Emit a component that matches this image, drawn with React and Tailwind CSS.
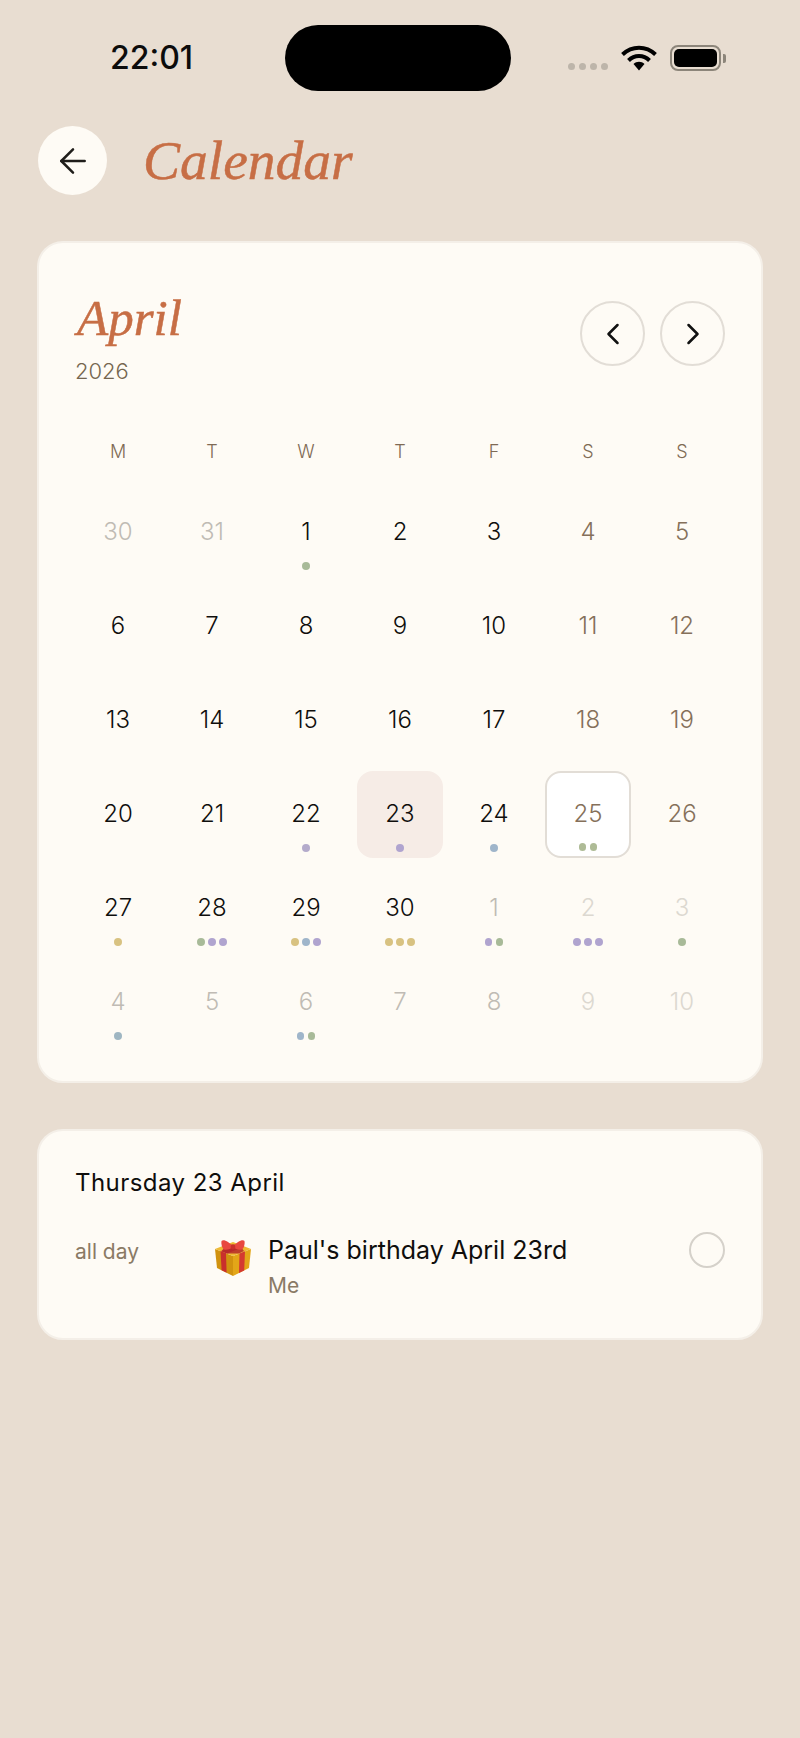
import React from "react";
import { ArrowLeft, ChevronLeft, ChevronRight } from "lucide-react";

const G = "bg-[#a8ba98]", P = "bg-[#b0a4cf]", B = "bg-[#9fb5ca]", Y = "bg-[#d8c281]", O = "bg-[#aebb96]", T = "bg-[#9fb6c2]", L = "bg-[#b4abcb]";

// tone: n normal, w weekend, m muted, f faint
const days = [
  ["30", "m"], ["31", "m"], ["1", "n", [G]], ["2", "n"], ["3", "n"], ["4", "w"], ["5", "w"],
  ["6", "n"], ["7", "n"], ["8", "n"], ["9", "n"], ["10", "n"], ["11", "w"], ["12", "w"],
  ["13", "n"], ["14", "n"], ["15", "n"], ["16", "n"], ["17", "n"], ["18", "w"], ["19", "w"],
  ["20", "n"], ["21", "n"], ["22", "n", [L]], ["23", "n", [P], "today"], ["24", "n", [B]], ["25", "w", [O, O], "sel"], ["26", "w"],
  ["27", "n", [Y]], ["28", "n", [G, P, P]], ["29", "n", [Y, B, P]], ["30", "n", [Y, Y, Y]], ["1", "m", [P, G]], ["2", "f", [P, P, P]], ["3", "f", [G]],
  ["4", "m", [T]], ["5", "m"], ["6", "m", [B, G]], ["7", "m"], ["8", "m"], ["9", "f"], ["10", "f"],
];

const tones = {
  n: "text-[#0f0e0c]",
  w: "text-[#85705a]",
  m: "text-[#c0bbb4]",
  f: "text-[#dcd8d0]",
};

function Cell({ label, tone, dots = [], state }) {
  const box =
    state === "today"
      ? "bg-[#f6ece6] border-[#f6ece6]"
      : state === "sel"
      ? "bg-white border-[#e2ddd6]"
      : "border-transparent";
  return (
    <div className={`h-[87px] rounded-[16px] border-2 flex flex-col items-center pt-[26px] ${box}`}>
      <span className={`text-[24px] leading-[30px] font-light ${tones[tone]}`}>{label}</span>
      <div className={`flex gap-[3.5px] ${state === "sel" ? "mt-[14px]" : "mt-[15px]"}`}>
        {dots.map((c, i) => (
          <span key={i} className={`w-[7.5px] h-[7.5px] rounded-full ${c}`} />
        ))}
      </div>
    </div>
  );
}

function Gift() {
  return (
    <svg width="40" height="40" viewBox="0 0 40 40" className="shrink-0 mt-[4px]">
      <path d="M2 11 L20 18 L20 38 L4 30 Z" fill="#d1920f" />
      <path d="M20 18 L38 11 L36 30 L20 38 Z" fill="#e3a618" />
      <path d="M2 11 L20 4 L38 11 L20 18 Z" fill="#eeba34" />
      <path d="M7.5 13 L13 15.2 L13.6 34.8 L8.6 32.2 Z" fill="#c9302c" />
      <path d="M26.5 15.5 L32 13.3 L31.2 32.6 L26 35 Z" fill="#d43a30" />
      <path d="M8 13.2 L25 6.5 L31 8.8 L14 15.6 Z" fill="#c9302c" />
      <path d="M14 6.5 L26 6.5 L31 13 L26 15.5 L14 15.5 L8.5 13 Z" fill="#b5292a" opacity="0.85" />
      <path d="M20 9 C16 3 10 1 8.5 3 C8 6 9 10 11 11.5 C14 12 18 11 20 9 Z" fill="#e8483f" />
      <path d="M20 9 C24 3 30 1 31.5 3 C32 6 31 10 29 11.5 C26 12 22 11 20 9 Z" fill="#e8483f" />
      <circle cx="20" cy="9" r="2.4" fill="#c9302c" />
    </svg>
  );
}

export default function App() {
  return (
    <div className="w-[800px] h-[1738px] bg-[#e8ddd1] font-['Inter',sans-serif] text-[#0f0e0c]">
      <div className="pt-[25px] pl-[110px] pr-[74px] flex items-start">
        <div className="w-[176px] h-[66px] flex items-center text-[32px] leading-[40px] font-medium text-[#0c0c0c]">
          22:01
        </div>
        <div className="w-[228px] h-[66px] rounded-full bg-black" />
        <div className="ml-[57px] h-[66px] flex items-start pt-[20px]">
          <div className="flex gap-[4px] mt-[18px]">
            <span className="w-[7px] h-[7px] rounded-full bg-[#bdb5aa]" />
            <span className="w-[7px] h-[7px] rounded-full bg-[#bdb5aa]" />
            <span className="w-[7px] h-[7px] rounded-full bg-[#bdb5aa]" />
            <span className="w-[7px] h-[7px] rounded-full bg-[#bdb5aa]" />
          </div>
          <svg width="36" height="26" viewBox="0 0 36 26" className="ml-[13px]">
            <path d="M1.5 9.5 C11 0.5 25 0.5 34.5 9.5" fill="none" stroke="#000" strokeWidth="4" />
            <path d="M7.5 15.5 C13.5 9.5 22.5 9.5 28.5 15.5" fill="none" stroke="#000" strokeWidth="4" />
            <path d="M12.5 19 C15.5 16 20.5 16 23.5 19 L18 25.5 Z" fill="#000" />
          </svg>
          <div className="ml-[13px] w-[51px] h-[26px] rounded-[8px] border-2 border-[#8c857a] p-[2px]">
            <div className="w-full h-full rounded-[5px] bg-black" />
          </div>
          <div className="ml-[2px] mt-[9px] w-[3px] h-[9px] rounded-r-[2px] bg-[#8c857a]" />
        </div>
      </div>

      <div className="mt-[35px] pl-[38px] flex items-center gap-[36px]">
        <div className="w-[69px] h-[69px] rounded-full bg-[#fefbf5] flex items-center justify-center">
          <ArrowLeft size={40} strokeWidth={1.5} color="#1f1d1a" />
        </div>
        <h1 className="font-['Liberation_Serif',serif] italic font-normal text-[55.5px] leading-[64px] text-[#c76e45] [-webkit-text-stroke:0.5px_#c76e45]">
          Calendar
        </h1>
      </div>

      <div className="mt-[46px] mx-[37px] rounded-[26px] bg-[#fefbf5] border-2 border-[#f4efe8] px-[36px] pt-[46px] pb-[35px]">
        <div className="flex justify-between items-start">
          <div>
            <h2 className="mt-[1px] pl-[2px] font-['Liberation_Serif',serif] italic font-normal text-[51px] leading-[56px] text-[#c76e45] [-webkit-text-stroke:0.5px_#c76e45]">
              April
            </h2>
            <div className="mt-[11px] text-[22px] leading-[28px] font-light text-[#75664f]">2026</div>
          </div>
          <div className="mt-[12px] flex gap-[15px]">
            <div className="w-[65px] h-[65px] rounded-full border-2 border-[#e2ddd6] flex items-center justify-center">
              <ChevronLeft size={36} strokeWidth={1.7} color="#111" />
            </div>
            <div className="w-[65px] h-[65px] rounded-full border-2 border-[#e2ddd6] flex items-center justify-center">
              <ChevronRight size={36} strokeWidth={1.7} color="#111" />
            </div>
          </div>
        </div>

        <div className="mt-[55px] grid grid-cols-7 gap-x-[8px] text-center text-[18px] leading-[24px] font-light text-[#7f6a54]">
          {["M", "T", "W", "T", "F", "S", "S"].map((d, i) => (
            <div key={i}>{d}</div>
          ))}
        </div>

        <div className="mt-[25px] grid grid-cols-7 gap-x-[8px] gap-y-[7px]">
          {days.map(([label, tone, dots, state], i) => (
            <Cell key={i} label={label} tone={tone} dots={dots} state={state} />
          ))}
        </div>
      </div>

      <div className="mt-[46px] mx-[37px] h-[211px] rounded-[26px] bg-[#fefbf5] border-2 border-[#f4efe8] px-[36px] pt-[37px]">
        <div className="text-[24px] leading-[30px] tracking-[0.45px]">Thursday 23 April</div>
        <div className="mt-[36px] flex items-start">
          <div className="w-[138px] pt-[4px] text-[21px] leading-[28px] text-[#8a7a65]">all day</div>
          <Gift />
          <div className="ml-[15px] flex-1">
            <div className="text-[25px] leading-[32px]">Paul's birthday April 23rd</div>
            <div className="mt-[6px] text-[21px] leading-[28px] text-[#8a7a65]">Me</div>
          </div>
          <div className="mt-[-2px] w-[36px] h-[36px] rounded-full border-2 border-[#d5d1ca]" />
        </div>
      </div>
    </div>
  );
}
